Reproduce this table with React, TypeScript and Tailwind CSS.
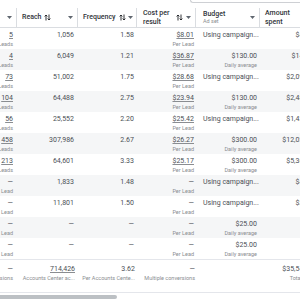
import React from 'react';

type Row = {
  res: string;
  resSub: string;
  reach: string;
  freq: string;
  cost: string;
  budget: string | null;
  amount: string;
};

const rows: Row[] = [
  { res: '5', resSub: 'Meta Leads', reach: '1,056', freq: '1.58', cost: '$8.01', budget: null, amount: '$40.05' },
  { res: '4', resSub: 'Meta Leads', reach: '6,049', freq: '1.21', cost: '$36.87', budget: '$130.00', amount: '$147.48' },
  { res: '73', resSub: 'Meta Leads', reach: '51,002', freq: '1.75', cost: '$28.68', budget: null, amount: '$2,093.64' },
  { res: '104', resSub: 'Meta Leads', reach: '64,488', freq: '2.75', cost: '$23.94', budget: '$130.00', amount: '$2,489.76' },
  { res: '56', resSub: 'Meta Leads', reach: '25,552', freq: '2.20', cost: '$25.42', budget: null, amount: '$1,423.52' },
  { res: '458', resSub: 'Meta Leads', reach: '307,986', freq: '2.67', cost: '$26.27', budget: '$300.00', amount: '$12,031.66' },
  { res: '213', resSub: 'Meta Leads', reach: '64,601', freq: '3.33', cost: '$25.17', budget: '$300.00', amount: '$5,361.21' },
  { res: '—', resSub: 'Lead', reach: '1,833', freq: '1.48', cost: '—', budget: null, amount: '$46.12' },
  { res: '—', resSub: 'Lead', reach: '11,801', freq: '1.50', cost: '—', budget: null, amount: '$28.40' },
  { res: '—', resSub: 'Lead', reach: '—', freq: '—', cost: '—', budget: '$25.00', amount: '—' },
  { res: '—', resSub: 'Lead', reach: '—', freq: '—', cost: '—', budget: '$25.00', amount: '—' },
];

function SortIcon() {
  return (
    <svg width="7" height="7" viewBox="0 0 7 7" className="shrink-0 text-[#1c1e21]">
      <path d="M2 6.5V1M0.6 2.4L2 1l1.4 1.4" stroke="currentColor" strokeWidth="0.9" fill="none" />
      <path d="M5 0.5V6M3.6 4.6L5 6l1.4-1.4" stroke="currentColor" strokeWidth="0.9" fill="none" />
    </svg>
  );
}

function Caret() {
  return (
    <svg width="5" height="3" viewBox="0 0 5 3" className="shrink-0 text-[#606770]">
      <path d="M0 0h5L2.5 3z" fill="currentColor" />
    </svg>
  );
}

export default function App() {
  return (
    <div className="w-[300px] h-[300px] overflow-hidden bg-white font-['Roboto','Liberation_Sans',sans-serif] text-[#1c1e21]">
      {/* top search box edge */}
      <div className="h-[8px]">
        <div className="ml-[190px] w-[140px] h-[3px] border-b border-l border-[#ced0d4] rounded-bl-[3px]" />
      </div>

      {/* header */}
      <div className="flex h-[20px] border-b border-[#dadde1] text-[7px] leading-[8.5px] font-medium text-[#303338] w-[330px]">
        <div className="w-[17px] shrink-0 flex items-center justify-end pr-[4px] border-r border-[#dadde1]">
          <Caret />
        </div>
        <div className="w-[61px] shrink-0 flex items-center justify-between pl-[5px] pr-[4px] border-r border-[#dadde1]">
          <span className="flex items-center gap-[3px]">Reach <SortIcon /></span>
          <Caret />
        </div>
        <div className="w-[59px] shrink-0 flex items-center justify-between pl-[5px] pr-[3px] border-r border-[#dadde1]">
          <span className="flex items-center gap-[3px]">Frequency <SortIcon /></span>
          <Caret />
        </div>
        <div className="w-[59px] shrink-0 flex items-center justify-between pl-[6px] pr-[4px] border-r border-[#dadde1]">
          <span>Cost per<br />result</span>
          <span className="flex items-center gap-[3px]"><SortIcon /><Caret /></span>
        </div>
        <div className="w-[64px] shrink-0 flex items-center justify-between pl-[7px] pr-[4px] border-r border-[#dadde1]">
          <span className="flex flex-col">
            <span>Budget</span>
            <span className="text-[5.5px] leading-[7px] font-normal text-[#8a8d91]">Ad set</span>
          </span>
          <Caret />
        </div>
        <div className="w-[70px] shrink-0 flex items-center pl-[5px]">
          <span>Amount<br />spent</span>
        </div>
      </div>

      {/* rows */}
      {rows.map((r, i) => (
        <div
          key={i}
          className={`flex h-[21px] w-[330px] pt-[3px] text-[#4b4f56] ${i % 2 === 1 ? 'bg-[#f5f6f7]' : 'bg-white'}`}
        >
          <div className="w-[17px] shrink-0 overflow-hidden flex flex-col items-end pr-[4px]">
            <span className={`text-[7px] leading-[9px] whitespace-nowrap ${r.res !== '—' ? 'underline decoration-[#8a8d91] underline-offset-[1px]' : ''}`}>{r.res}</span>
            <span className="text-[5.5px] leading-[8px] text-[#8a8d91] whitespace-nowrap">{r.resSub}</span>
          </div>
          <div className="w-[61px] shrink-0 flex flex-col items-end pr-[4px]">
            <span className="text-[7px] leading-[9px]">{r.reach}</span>
          </div>
          <div className="w-[59px] shrink-0 flex flex-col items-end pr-[3px]">
            <span className="text-[7px] leading-[9px]">{r.freq}</span>
          </div>
          <div className="w-[59px] shrink-0 flex flex-col items-end pr-[2px]">
            <span className={`text-[7px] leading-[9px] ${r.cost !== '—' ? 'underline decoration-[#8a8d91] underline-offset-[1px]' : ''}`}>{r.cost}</span>
            <span className="text-[5.5px] leading-[8px] text-[#8a8d91]">Per Lead</span>
          </div>
          {r.budget ? (
            <div className="w-[64px] shrink-0 flex flex-col items-end pr-[3px]">
              <span className="text-[7px] leading-[9px]">{r.budget}</span>
              <span className="text-[5.5px] leading-[8px] text-[#8a8d91]">Daily average</span>
            </div>
          ) : (
            <div className="w-[64px] shrink-0 flex flex-col items-start pl-[7px]">
              <span className="text-[7px] leading-[9px] whitespace-nowrap">Using campaign...</span>
            </div>
          )}
          <div className="w-[60px] shrink-0 flex flex-col items-end pr-[3px]">
            <span className="text-[7px] leading-[9px] whitespace-nowrap">{r.amount}</span>
          </div>
        </div>
      ))}

      {/* summary */}
      <div className="flex h-[34px] w-[330px] pt-[5px] border-t border-b border-[#e4e6eb] text-[#4b4f56]">
        <div className="w-[17px] shrink-0 overflow-hidden flex flex-col items-end pr-[4px]">
          <span className="text-[7px] leading-[9px]">—</span>
          <span className="text-[5.5px] leading-[8px] text-[#8a8d91] whitespace-nowrap">Multiple conversions</span>
        </div>
        <div className="w-[61px] shrink-0 flex flex-col items-end pr-[3px]">
          <span className="text-[7px] leading-[9px] underline decoration-[#8a8d91] underline-offset-[1px]">714,426</span>
          <span className="text-[5.5px] leading-[8px] text-[#8a8d91] whitespace-nowrap">Accounts Center ac...</span>
        </div>
        <div className="w-[59px] shrink-0 flex flex-col items-end pr-[2px]">
          <span className="text-[7px] leading-[9px]">3.62</span>
          <span className="text-[5.5px] leading-[8px] text-[#8a8d91] whitespace-nowrap">Per Accounts Cente...</span>
        </div>
        <div className="w-[59px] shrink-0 flex flex-col items-end pr-[1px]">
          <span className="text-[7px] leading-[9px]">—</span>
          <span className="text-[5.5px] leading-[8px] text-[#8a8d91] whitespace-nowrap">Multiple conversions</span>
        </div>
        <div className="w-[64px] shrink-0" />
        <div className="w-[60px] shrink-0 flex flex-col items-end pr-[3px]">
          <span className="text-[7px] leading-[9px]">$35,544.20</span>
          <span className="text-[5.5px] leading-[8px] text-[#8a8d91] whitespace-nowrap">Total spent</span>
        </div>
      </div>

      {/* horizontal scrollbar */}
      <div className="h-[8px] pt-[2px]">
        <div className="w-[117px] h-[4px] rounded-r-full bg-[#bcc0c4]" />
      </div>
    </div>
  );
}
